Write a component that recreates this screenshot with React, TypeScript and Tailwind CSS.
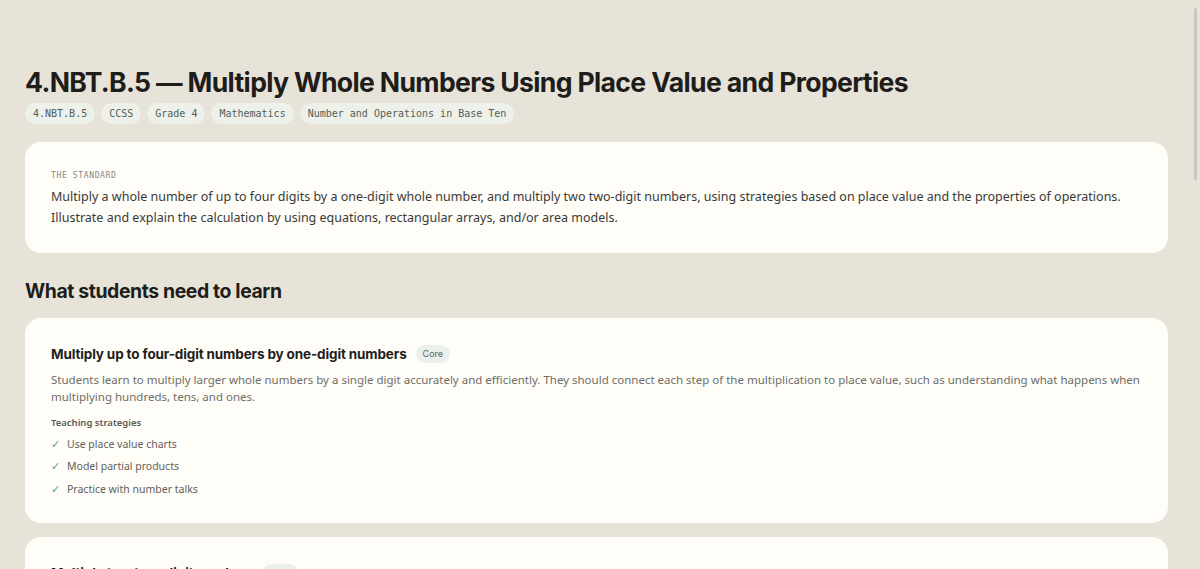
import React from "react";

const chips = ["4.NBT.B.5", "CCSS", "Grade 4", "Mathematics", "Number and Operations in Base Ten"];

function Skill({
  title,
  badge,
  desc,
  strategies,
}: {
  title: string;
  badge: string;
  desc: string;
  strategies: string[];
}) {
  return (
    <div className="rounded-[16px] bg-[#fefdf8] px-[26px] pt-[26px] pb-[25px]">
      <div className="flex items-center gap-[9px]">
        <h3 className="font-['Inter',sans-serif] text-[13.5px] font-bold tracking-[-0.01em] text-[#1f1f1c]">{title}</h3>
        <span className="rounded-full bg-[#ebf0ec] px-[7px] py-[2px] font-['Inter',sans-serif] text-[9px] text-[#5a6661]">
          {badge}
        </span>
      </div>
      <p className="mt-[7px] font-['Noto_Sans',sans-serif] text-[11.5px] leading-[17px] text-[#6f6e68]">{desc}</p>
      <div className="mt-[11px] font-['Noto_Sans',sans-serif] text-[9.5px] font-semibold text-[#5a5954]">
        Teaching strategies
      </div>
      <ul className="mt-[4px] flex flex-col gap-[4.5px]">
        {strategies.map((s) => (
          <li key={s} className="flex items-center gap-[7px] font-['Noto_Sans',sans-serif] text-[10.5px] leading-[18px] text-[#62615b]">
            <span className="text-[#5e9c7f]">✓</span>
            <span>{s}</span>
          </li>
        ))}
      </ul>
    </div>
  );
}

export default function App() {
  return (
    <div className="min-h-screen bg-[#e7e3d8] pl-[25px] pr-[32px] pt-[64px] pb-[40px]">
      <div className="pointer-events-none fixed right-[3px] top-[8px] h-[172px] w-[3px] rounded-full bg-[#c9c7c1]" />
      <h1 className="font-['Inter',sans-serif] text-[26.6px] font-bold leading-[36px] tracking-[-0.025em] text-[#1e1d1a]">
        4.NBT.B.5 — Multiply Whole Numbers Using Place Value and Properties
      </h1>
      <div className="mt-[3px] flex gap-[6px]">
        {chips.map((c) => (
          <span
            key={c}
            className="rounded-full bg-[#eef0ea] px-[8px] py-[4px] font-['DejaVu_Sans_Mono',monospace] text-[10px] leading-[13px] text-[#52605b]"
          >
            {c}
          </span>
        ))}
      </div>

      <div className="mt-[18px] rounded-[16px] bg-[#fefdf8] px-[26px] pt-[28px] pb-[25px]">
        <div className="font-['DejaVu_Sans_Mono',monospace] text-[8px] uppercase tracking-[0.08em] text-[#8a8880]">
          The Standard
        </div>
        <p className="mt-[4px] font-['Noto_Sans',sans-serif] text-[12.5px] leading-[21px] text-[#3b3a36]">
          Multiply a whole number of up to four digits by a one-digit whole number, and multiply two two-digit numbers,
          using strategies based on place value and the properties of operations. Illustrate and explain the calculation
          by using equations, rectangular arrays, and/or area models.
        </p>
      </div>

      <h2 className="mt-[24px] font-['Inter',sans-serif] text-[19.4px] font-bold tracking-[-0.02em] text-[#1e1d1a]">
        What students need to learn
      </h2>

      <div className="mt-[12px] flex flex-col gap-[14px]">
        <Skill
          title="Multiply up to four-digit numbers by one-digit numbers"
          badge="Core"
          desc="Students learn to multiply larger whole numbers by a single digit accurately and efficiently. They should connect each step of the multiplication to place value, such as understanding what happens when multiplying hundreds, tens, and ones."
          strategies={["Use place value charts", "Model partial products", "Practice with number talks"]}
        />
        <Skill
          title="Multiply two two-digit numbers"
          badge="Core"
          desc="Students multiply two-digit numbers by two-digit numbers using strategies based on place value and the properties of operations, such as the distributive property."
          strategies={["Use area models", "Decompose numbers by place value", "Connect to the standard algorithm"]}
        />
      </div>
    </div>
  );
}
